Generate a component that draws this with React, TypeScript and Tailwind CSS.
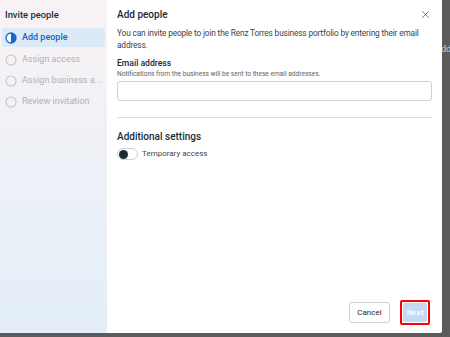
import React from "react";

function Circle({ half }: { half?: boolean }) {
  if (half) {
    return (
      <svg width="12" height="12" viewBox="0 0 12 12">
        <circle cx="6" cy="6" r="5" fill="white" stroke="#1b64d2" strokeWidth="1.3" />
        <path d="M6 1 A5 5 0 0 1 6 11 Z" fill="#1b64d2" />
      </svg>
    );
  }
  return (
    <svg width="12" height="12" viewBox="0 0 12 12">
      <circle cx="6" cy="6" r="5" fill="none" stroke="#c4c4c8" strokeWidth="1.1" />
    </svg>
  );
}

export default function App() {
  return (
    <div
      className="w-[450px] h-[337px] bg-[#5b5b5b] relative overflow-hidden"
      style={{ fontFamily: "Roboto, 'Liberation Sans', sans-serif" }}
    >
      <div className="absolute left-[442px] top-[43px] w-[8px] text-[9px] text-[#cfcfcf] overflow-hidden whitespace-nowrap">
        <span className="-ml-[1px]">dd</span>
      </div>
      <div className="w-[442px] h-[333px] flex bg-white rounded-br-[2px]">
        <div className="w-[107px] h-full bg-gradient-to-b from-[#f9f2f4] via-[#eef1f7] to-[#e3eef8] flex flex-col pt-[8px]">
          <div className="px-[5px] text-[9.4px] font-medium text-[#1c2b33] h-[14px] leading-[14px]">Invite people</div>
          <div className="mt-[6px] mx-[2px] h-[19px] rounded-[3px] bg-[#dceaf8] flex items-center gap-[5px] pl-[3px]">
            <Circle half />
            <span className="text-[9px] font-medium text-[#1a5fc4]">Add people</span>
          </div>
          <div className="mx-[2px] pl-[3px] mt-[2px] flex flex-col">
            <div className="h-[21px] flex items-center gap-[5px]">
              <Circle />
              <span className="text-[9px] text-[#aeb1b6]">Assign access</span>
            </div>
            <div className="h-[21px] flex items-center gap-[5px]">
              <Circle />
              <span className="text-[9px] text-[#aeb1b6] whitespace-nowrap">Assign business a...</span>
            </div>
            <div className="h-[21px] flex items-center gap-[5px]">
              <Circle />
              <span className="text-[9px] text-[#aeb1b6]">Review invitation</span>
            </div>
          </div>
        </div>
        <div className="flex-1 flex flex-col px-[10px] pt-[7px] pb-[8px]">
          <div className="flex items-center justify-between h-[14px]">
            <span className="text-[10px] font-medium text-[#1c2b33]">Add people</span>
            <svg width="9" height="9" viewBox="0 0 10 10" className="mr-[2px]">
              <path d="M1.5 1.5 L8.5 8.5 M8.5 1.5 L1.5 8.5" stroke="#666" strokeWidth="1" />
            </svg>
          </div>
          <p className="mt-[6px] text-[8.3px] tracking-[-0.15px] leading-[12px] text-[#3e4448]">
            You can invite people to join the Renz Torres business portfolio by entering their email address.
          </p>
          <div className="mt-[7px] text-[8.6px] font-medium text-[#1c2b33] leading-[11px]">Email address</div>
          <div className="text-[6.6px] text-[#5d6266] leading-[10px]">Notifications from the business will be sent to these email addresses.</div>
          <div className="mt-[2px] h-[20px] border border-[#ced0d4] rounded-[3px]" />
          <div className="mt-[16px] border-t border-[#dadde1]" />
          <div className="mt-[12px] text-[10px] font-medium text-[#1c2b33] leading-[14px]">Additional settings</div>
          <div className="mt-[4px] flex items-center gap-[4px]">
            <div className="w-[21px] h-[12px] rounded-full border border-[#ced0d4] bg-white flex items-center pl-[1px]">
              <div className="w-[9px] h-[9px] rounded-full bg-[#1c2b33]" />
            </div>
            <span className="text-[8px] text-[#3e4448]">Temporary access</span>
          </div>
          <div className="flex-1" />
          <div className="flex justify-end items-center gap-[10px] pr-[2px]">
            <div className="h-[21px] w-[41px] rounded-[3px] border border-[#ced0d4] flex items-center justify-center text-[8px] text-[#1c2b33]">Cancel</div>
            <div className="h-[25px] w-[30px] rounded-[2px] border-[2px] border-[#ff0000] flex items-center justify-center">
              <div className="h-[19px] w-[24px] bg-[#c4d9f3] rounded-[2px] flex items-center justify-center text-[8px] text-white font-medium">Next</div>
            </div>
          </div>
        </div>
      </div>
    </div>
  );
}
